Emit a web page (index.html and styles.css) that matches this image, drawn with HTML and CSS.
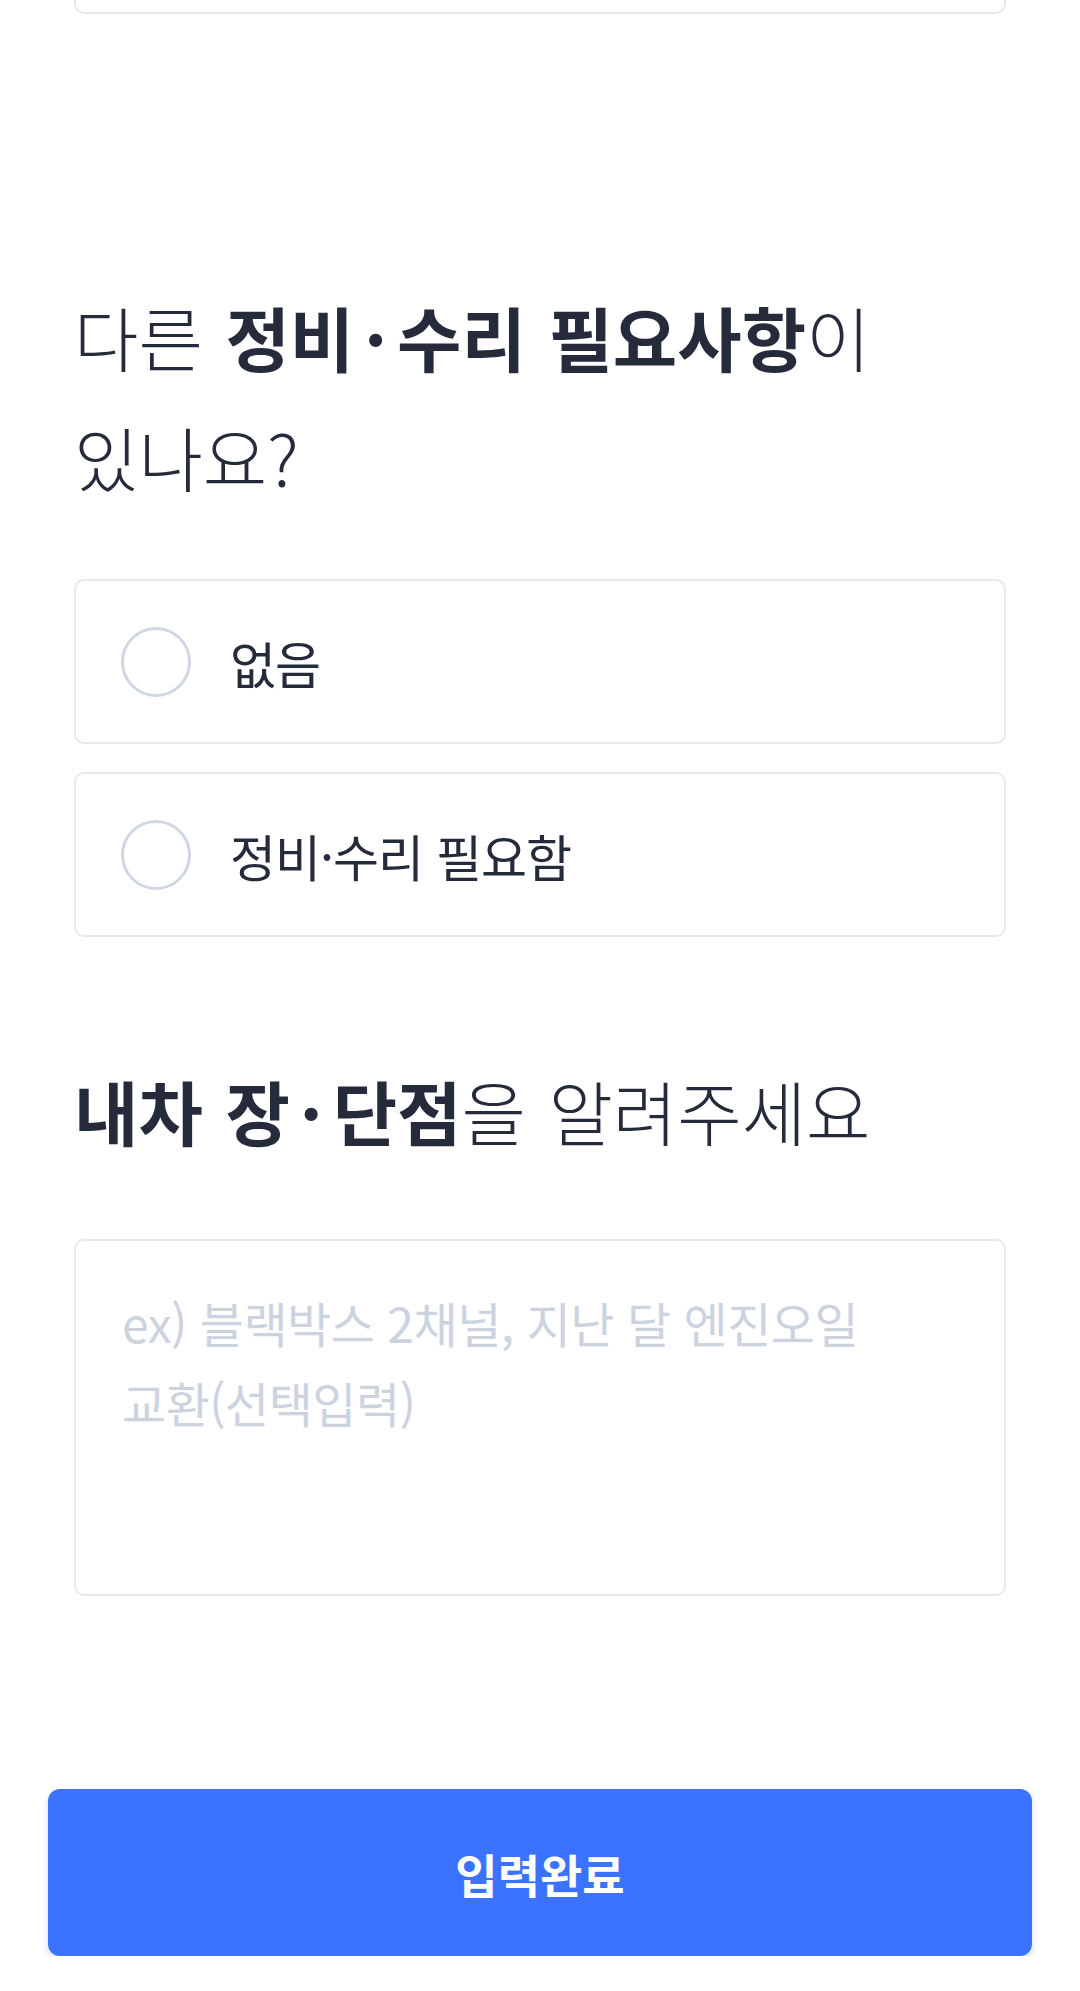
FILE: index.html
```html
<!DOCTYPE html>
<html lang="ko">
<head>
    <meta charset="UTF-8">
    <meta name="viewport" content="width=device-width, initial-scale=1.0">
    <title>내차 정보 입력</title>
    <link rel="stylesheet" href="styles.css">
</head>
<body>
    <div class="form">
        <div class="prev-card"></div>

        <h2 class="question">다른 <b>정비<span class="dot">·</span>수리 필요사항</b>이<br>있나요?</h2>
        <div class="options">
            <label class="option">
                <input type="radio" name="repair" value="none">
                <span class="radio"></span>
                <span class="option-text">없음</span>
            </label>
            <label class="option">
                <input type="radio" name="repair" value="need">
                <span class="radio"></span>
                <span class="option-text">정비·수리 필요함</span>
            </label>
        </div>

        <h2 class="question question-memo"><b>내차 장<span class="dot">·</span>단점</b>을 알려주세요</h2>
        <textarea class="memo" placeholder="ex) 블랙박스 2채널, 지난 달 엔진오일 교환&#8288;(선택입력)"></textarea>
    </div>

    <div class="footer">
        <button class="submit" type="button">입력완료</button>
    </div>
</body>
</html>
```

FILE: styles.css
```css
* {
    box-sizing: border-box;
}

body {
    margin: 0;
    background: #fff;
    font-family: "Noto Sans CJK KR", "Noto Sans", sans-serif;
    color: #262b3b;
}

.form {
    padding: 0 74px;
}

/* bottom edge of the card from the previous question */
.prev-card {
    height: 100px;
    margin-top: -86px;
    border: 2px solid #e6e9ee;
    border-radius: 10px;
}

.question {
    margin: 263px 0 0;
    font-size: 70px;
    line-height: 120px;
    font-weight: 300;
    word-spacing: 3px;
    word-break: keep-all;
}

.question b {
    font-weight: 700;
}

.question .dot {
    margin: 0 10px;
}

.question-memo {
    margin-top: 114px;
}

.options {
    display: flex;
    flex-direction: column;
    gap: 28px;
    margin-top: 62px;
}

.option {
    display: flex;
    align-items: center;
    gap: 39px;
    height: 165px;
    padding-left: 45px;
    border: 2px solid #e6e9ee;
    border-radius: 10px;
    cursor: pointer;
}

.option input {
    display: none;
}

.radio {
    width: 70px;
    height: 70px;
    border: 3px solid #cfd7e2;
    border-radius: 50%;
}

.option input:checked + .radio {
    border: 20px solid #3b72ff;
}

.option-text {
    font-size: 50px;
    letter-spacing: -1px;
}

.memo {
    display: block;
    width: 100%;
    height: 357px;
    margin-top: 68px;
    padding: 41px 46px;
    border: 2px solid #e6e9ee;
    border-radius: 10px;
    resize: none;
    outline: none;
    font-family: inherit;
    font-size: 48px;
    line-height: 80px;
    letter-spacing: -0.5px;
    color: #262b3b;
    word-break: keep-all;
}

.memo::placeholder {
    color: #ccd3df;
}

.footer {
    padding: 193px 48px 0;
}

.submit {
    display: block;
    width: 100%;
    height: 167px;
    border: none;
    border-radius: 12px;
    background: #3b72ff;
    box-shadow: 0 3px 6px rgba(59, 114, 255, 0.25);
    color: #fff;
    font-family: inherit;
    font-size: 46px;
    font-weight: 700;
    cursor: pointer;
}
```
